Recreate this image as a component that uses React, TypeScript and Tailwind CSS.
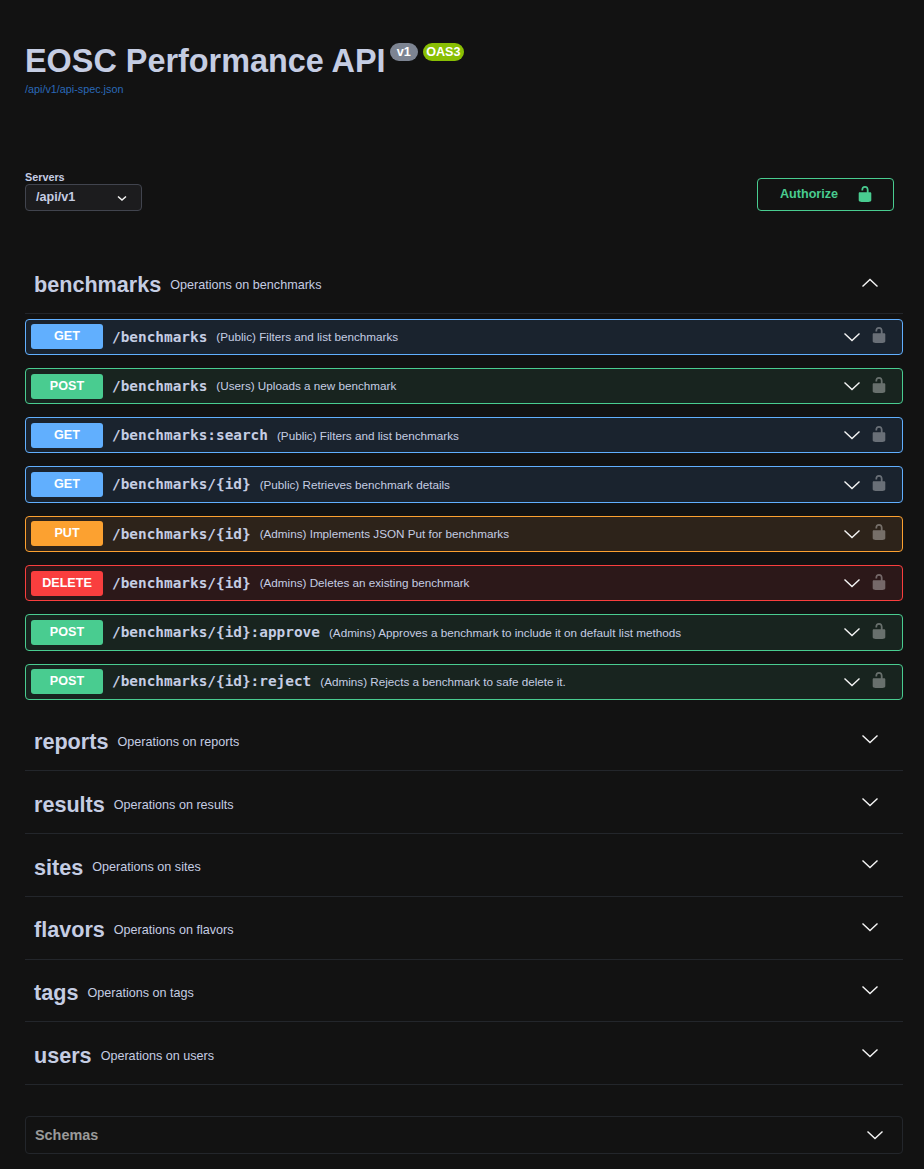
import React from "react";

const ops = [
  { method: "GET", path: "/benchmarks", desc: "(Public) Filters and list benchmarks" },
  { method: "POST", path: "/benchmarks", desc: "(Users) Uploads a new benchmark" },
  { method: "GET", path: "/benchmarks:search", desc: "(Public) Filters and list benchmarks" },
  { method: "GET", path: "/benchmarks/{id}", desc: "(Public) Retrieves benchmark details" },
  { method: "PUT", path: "/benchmarks/{id}", desc: "(Admins) Implements JSON Put for benchmarks" },
  { method: "DELETE", path: "/benchmarks/{id}", desc: "(Admins) Deletes an existing benchmark" },
  { method: "POST", path: "/benchmarks/{id}:approve", desc: "(Admins) Approves a benchmark to include it on default list methods" },
  { method: "POST", path: "/benchmarks/{id}:reject", desc: "(Admins) Rejects a benchmark to safe delete it." },
];

const methodStyles: Record<string, { box: string; badge: string }> = {
  GET: { box: "border-[#61affe] bg-[#1a232e]", badge: "bg-[#61affe]" },
  POST: { box: "border-[#49cc90] bg-[#18241f]", badge: "bg-[#49cc90]" },
  PUT: { box: "border-[#fca130] bg-[#2d231a]", badge: "bg-[#fca130]" },
  DELETE: { box: "border-[#f93e3e] bg-[#2c1819]", badge: "bg-[#f93e3e]" },
};

const tags = [
  { name: "reports", desc: "Operations on reports" },
  { name: "results", desc: "Operations on results" },
  { name: "sites", desc: "Operations on sites" },
  { name: "flavors", desc: "Operations on flavors" },
  { name: "tags", desc: "Operations on tags" },
  { name: "users", desc: "Operations on users" },
];

const Chevron = ({ up = false, className = "" }: { up?: boolean; className?: string }) => (
  <svg className={className} width="18" height="18" viewBox="0 0 18 18" fill="none">
    <path d={up ? "M1.5 12.5 9 5.5l7.5 7" : "M1.5 5.5 9 12.5l7.5-7"} stroke="#f5f5f5" strokeWidth="1.4" />
  </svg>
);

const Lock = ({ color, opacity = 1, className = "" }: { color: string; opacity?: number; className?: string }) => (
  <svg className={className} width="18" height="18" viewBox="0 0 20 20">
    <path
      fill={color}
      fillOpacity={opacity}
      d="M15.8 8H14V5.6C14 2.703 12.665 1 10 1 7.334 1 6 2.703 6 5.6V6h2v-.801C8 3.754 8.797 3 10 3c1.203 0 2 .754 2 2.199V8H4c-.553 0-1 .646-1 1.199V17c0 .549.428 1.139.951 1.307l1.197.387C5.672 18.861 6.55 19 7.1 19h5.8c.549 0 1.428-.139 1.951-.307l1.196-.387c.524-.167.953-.757.953-1.306V9.199C17 8.646 16.352 8 15.8 8z"
    />
  </svg>
);

const OpRow = ({ method, path, desc }: { method: string; path: string; desc: string }) => {
  const s = methodStyles[method];
  return (
    <div className={`flex h-[36.28px] mb-[13px] items-center rounded-[4px] border pl-[5px] pr-[14px] ${s.box}`}>
      <span className={`flex h-[25px] w-[72px] shrink-0 items-center justify-center rounded-[3px] text-[12.6px] font-bold text-white ${s.badge}`}>
        {method}
      </span>
      <span className="ml-[9px] mt-px font-['DejaVu_Sans_Mono',monospace] text-[14.4px] font-bold text-[#c5cde3]">{path}</span>
      <span className="ml-[9px] text-[11.7px] text-[#c5cde3]">{desc}</span>
      <Chevron className="ml-auto" />
      <Lock color="#ffffff" opacity={0.35} className="ml-[9px] mb-[3px]" />
    </div>
  );
};

const TagRow = ({ name, desc }: { name: string; desc: string }) => (
  <div className="flex h-[62.75px] items-center border-b border-[#23262b] pt-[6px] pl-[9px] pr-[24px]">
    <span className="text-[21.6px] font-bold text-[#c5cde3]">{name}</span>
    <span className="ml-[9px] text-[12.6px] text-[#c5cde3]">{desc}</span>
    <Chevron className="ml-auto mb-[7px]" />
  </div>
);

export default function App() {
  return (
    <div className="h-[1169px] w-[924px] overflow-hidden bg-[#121212] pl-[25px] pr-[21px] font-['Liberation_Sans',Arial,sans-serif]">
      {/* Info */}
      <div className="pt-[41px]">
        <div className="flex items-start">
          <h1 className="-mt-px mb-px text-[32.4px] leading-[42px] font-bold text-[#c5cde3]">EOSC Performance API</h1>
          <span className="ml-[4px] mt-[2px] flex h-[18px] items-center rounded-full bg-[#7d8492] px-[7px] text-[12.6px] font-bold text-white">v1</span>
          <span className="ml-[5px] mt-[2px] flex h-[18px] items-center rounded-full bg-[#89bf04] px-[3.5px] text-[12.6px] font-bold text-white">OAS3</span>
        </div>
        <a className="block text-[10.8px] leading-[13px] text-[#2a69b8]">/api/v1/api-spec.json</a>
      </div>

      {/* Servers and authorize */}
      <div className="mt-[76px] flex items-end justify-between pr-[9px]">
        <div>
          <div className="mb-px text-[10.8px] leading-[11px] font-bold text-[#c5cde3]">Servers</div>
          <div className="flex h-[27px] w-[117px] items-center justify-between rounded-[4px] border border-[#41444e] bg-[#1c1c1e] pl-[10px] pr-[14px] text-[12.6px] font-bold text-[#c5cde3]">
            /api/v1
            <svg width="10" height="10" viewBox="0 0 10 10" fill="none">
              <path d="M1 3.5 5 7l4-3.5" stroke="#f5f5f5" strokeWidth="1.5" />
            </svg>
          </div>
        </div>
        <div className="flex h-[33px] w-[137px] items-center rounded-[4px] border border-[#49cc90] pl-[22px] text-[12.6px] font-bold text-[#49cc90]">
          Authorize
          <Lock color="#49cc90" className="ml-[18px] mb-[2px]" />
        </div>
      </div>

      {/* benchmarks */}
      <div className="mt-[44px] flex h-[59px] items-center border-b border-[#23262b] pt-[2px] pl-[9px] pr-[24px]">
        <span className="text-[21.6px] font-bold text-[#c5cde3]">benchmarks</span>
        <span className="ml-[9px] mt-px text-[12.6px] text-[#c5cde3]">Operations on benchmarks</span>
        <Chevron up className="ml-auto mb-[5px]" />
      </div>
      <div className="pt-[4.7px]">
        {ops.map((op, i) => (
          <OpRow key={i} {...op} />
        ))}
      </div>

      <div className="-mt-[4.3px]">
        {tags.map((t) => (
          <TagRow key={t.name} {...t} />
        ))}
      </div>

      {/* Schemas */}
      <div className="mt-[31px] flex h-[38px] items-center rounded-[4px] border border-[#23262b] pl-[9px] pr-[18px]">
        <span className="mt-px text-[14.4px] font-bold text-[#9a9a9a]">Schemas</span>
        <Chevron className="ml-auto" />
      </div>
    </div>
  );
}
